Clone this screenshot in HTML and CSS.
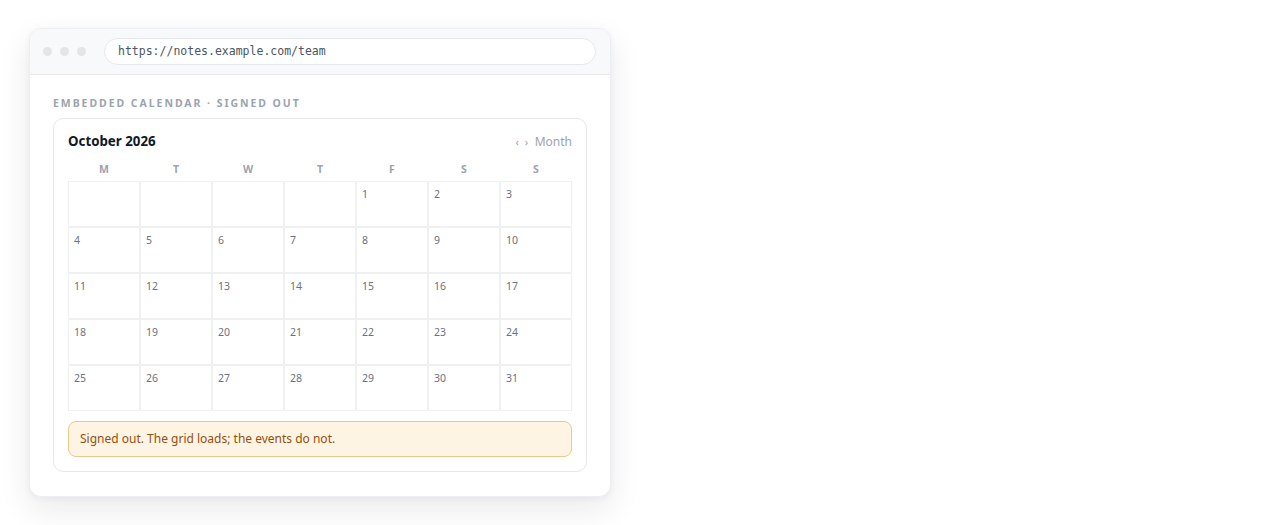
FILE: index.html
```html
<!DOCTYPE html>
<html>
<head>
<meta charset="utf-8">
<link rel="stylesheet" href="styles.css">
</head>
<body>
<div class="stage">
  <div class="window">
    <div class="titlebar">
      <div class="dots"><span></span><span></span><span></span></div>
      <div class="url">https://notes.example.com/team</div>
    </div>
    <div class="content">
      <div class="label">Embedded calendar · signed out</div>
      <div class="card">
        <div class="cal-head">
          <div class="month">October 2026</div>
          <div class="nav"><span class="arrows">‹ ›</span> Month</div>
        </div>
        <div class="weekdays">
          <span>M</span><span>T</span><span>W</span><span>T</span><span>F</span><span>S</span><span>S</span>
        </div>
        <div class="grid">
          <div class="cell"></div><div class="cell"></div><div class="cell"></div><div class="cell"></div>
          <div class="cell">1</div><div class="cell">2</div><div class="cell">3</div>
          <div class="cell">4</div><div class="cell">5</div><div class="cell">6</div><div class="cell">7</div>
          <div class="cell">8</div><div class="cell">9</div><div class="cell">10</div>
          <div class="cell">11</div><div class="cell">12</div><div class="cell">13</div><div class="cell">14</div>
          <div class="cell">15</div><div class="cell">16</div><div class="cell">17</div>
          <div class="cell">18</div><div class="cell">19</div><div class="cell">20</div><div class="cell">21</div>
          <div class="cell">22</div><div class="cell">23</div><div class="cell">24</div>
          <div class="cell">25</div><div class="cell">26</div><div class="cell">27</div><div class="cell">28</div>
          <div class="cell">29</div><div class="cell">30</div><div class="cell">31</div>
        </div>
        <div class="notice">Signed out. The grid loads; the events do not.</div>
      </div>
    </div>
  </div>
</div>
</body>
</html>
```
FILE: styles.css
```css
* { box-sizing: border-box; }
html, body { margin: 0; padding: 0; background: #ffffff; }
body {
  font-family: "Segoe UI", "Noto Sans", "Open Sans", sans-serif;
  color: #111827;
}
.stage {
  padding: 28px 29px;
}
.window {
  width: 582px;
  background: #ffffff;
  border: 1px solid #eceef1;
  border-radius: 12px;
  box-shadow: 0 12px 32px rgba(17, 24, 39, 0.09), 0 2px 6px rgba(17, 24, 39, 0.04);
  overflow: hidden;
}
.titlebar {
  height: 46px;
  background: #f8f9fa;
  border-bottom: 1px solid #e5e7eb;
  display: flex;
  align-items: center;
  padding: 0 14px 0 13px;
  gap: 18px;
}
.dots {
  display: flex;
  gap: 8px;
}
.dots span {
  width: 9px;
  height: 9px;
  border-radius: 50%;
  background: #e3e5e8;
}
.url {
  flex: 1;
  height: 27px;
  border: 1px solid #e5e7eb;
  border-radius: 14px;
  background: #ffffff;
  font-family: "DejaVu Sans Mono", "Liberation Mono", monospace;
  font-size: 11.5px;
  color: #4b5563;
  line-height: 25px;
  padding: 0 13px;
}
.content {
  padding: 21px 23px 24px;
}
.label {
  font-size: 10.5px;
  font-weight: 700;
  letter-spacing: 1.95px;
  text-transform: uppercase;
  color: #9ca3af;
  line-height: 14px;
  margin-bottom: 8px;
}
.card {
  border: 1px solid #e5e7eb;
  border-radius: 10px;
  padding: 13px 14px 14px;
}
.cal-head {
  display: flex;
  justify-content: space-between;
  align-items: center;
  height: 18px;
}
.month {
  font-size: 13.3px;
  font-weight: 700;
  color: #111827;
}
.nav {
  font-size: 12px;
  color: #9ca3af;
}
.arrows {
  font-size: 11px;
  margin-right: 2px;
  letter-spacing: 1.5px;
}
.weekdays {
  display: grid;
  grid-template-columns: repeat(7, 72px);
  margin-top: 12px;
  margin-bottom: 5px;
  line-height: 14px;
}
.weekdays span {
  text-align: center;
  font-size: 10.5px;
  font-weight: 700;
  color: #9ca3af;
}
.grid {
  display: grid;
  grid-template-columns: repeat(7, 72px);
  grid-auto-rows: 46px;
}
.cell {
  border: 1px solid #eef0f2;
  padding: 5px 5px 4px;
  font-size: 10.5px;
  line-height: 14px;
  color: #6b7280;
}
.notice {
  margin-top: 10px;
  height: 36px;
  border: 1px solid #e9c98b;
  border-radius: 8px;
  background: #fef4e4;
  color: #92500e;
  font-size: 12px;
  line-height: 34px;
  padding: 0 11px;
}
```
